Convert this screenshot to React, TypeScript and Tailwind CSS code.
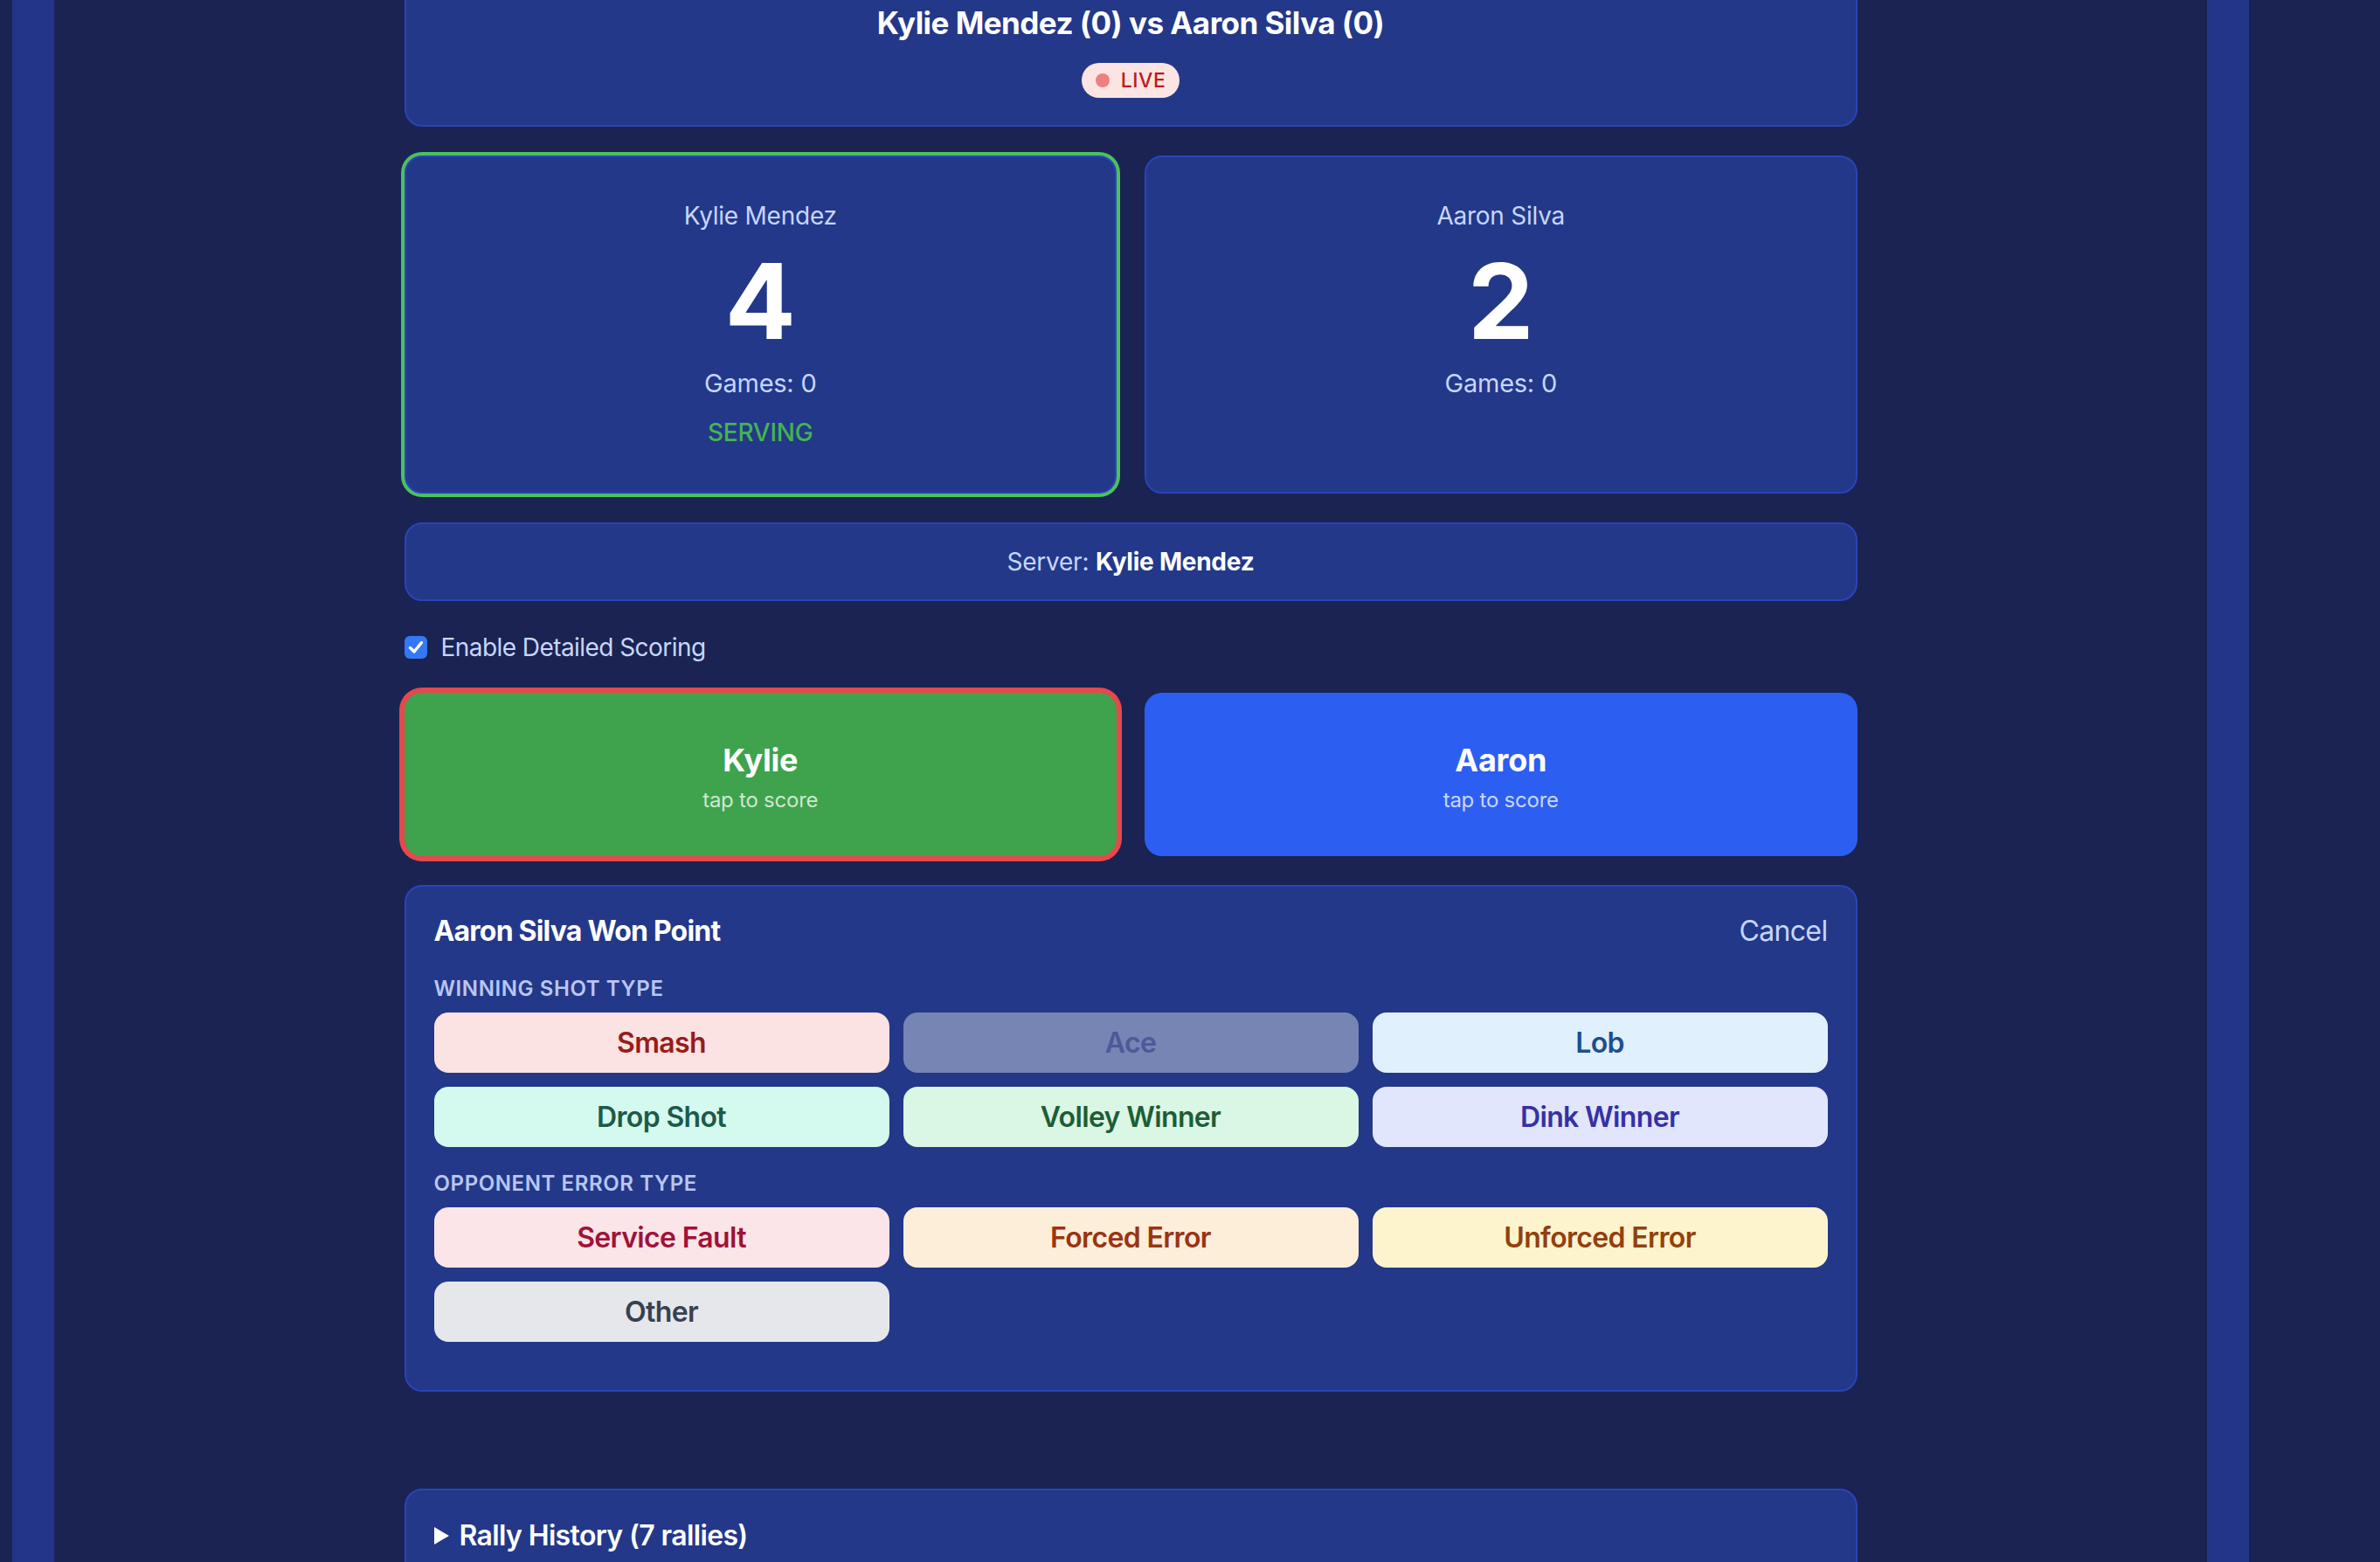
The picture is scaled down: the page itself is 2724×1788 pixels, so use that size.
import React from 'react';

type Shot = { label: string; cls: string };

const winningShots: Shot[] = [
  { label: 'Smash', cls: 'bg-[#fce3e3] text-[#991b1b]' },
  { label: 'Ace', cls: 'bg-[#7785b5] text-[#4b5a98]' },
  { label: 'Lob', cls: 'bg-[#e1f0fd] text-[#1e4e8c]' },
  { label: 'Drop Shot', cls: 'bg-[#d4f9ef] text-[#1c5a4a]' },
  { label: 'Volley Winner', cls: 'bg-[#daf6e4] text-[#1b5e36]' },
  { label: 'Dink Winner', cls: 'bg-[#e1e6fd] text-[#3730a3]' },
];

const errorShots: Shot[] = [
  { label: 'Service Fault', cls: 'bg-[#fce5e8] text-[#9f1239]' },
  { label: 'Forced Error', cls: 'bg-[#fdeeda] text-[#9a3412]' },
  { label: 'Unforced Error', cls: 'bg-[#fdf4cd] text-[#92400e]' },
  { label: 'Other', cls: 'bg-[#e5e7eb] text-[#374151]' },
];

const ShotGrid: React.FC<{ shots: Shot[] }> = ({ shots }) => (
  <div className="grid grid-cols-3 gap-[16px]">
    {shots.map((s) => (
      <button
        key={s.label}
        className={`h-[69px] rounded-[16px] text-[32px] font-semibold tracking-[-0.02em] ${s.cls}`}
      >
        {s.label}
      </button>
    ))}
  </div>
);

const ScoreCard: React.FC<{ name: string; score: number; games: number; serving?: boolean }> = ({
  name,
  score,
  games,
  serving,
}) => (
  <div
    className={`bg-[#233889] border-2 border-[#2a44b8] rounded-[20px] px-[48px] pt-[47px] pb-[48px] flex flex-col items-center ${
      serving ? 'ring-4 ring-[#4bc25c]' : ''
    }`}
  >
    <div className="text-[28px] leading-[40px] text-[#c7d6fb]">{name}</div>
    <div className="mt-[18px] text-[120px] leading-[120px] font-bold text-white">{score}</div>
    <div className="mt-[14px] text-[29px] leading-[40px] text-[#c7d6fb]">Games: {games}</div>
    {serving && (
      <div className="mt-[16px] text-[28px] leading-[40px] font-medium text-[#44b352]">SERVING</div>
    )}
  </div>
);

export default function App() {
  return (
    <div className="h-[1788px] overflow-hidden bg-[#1a2352] font-['Inter',sans-serif] tracking-[-0.015em] flex">
      <div className="w-[14px] shrink-0" />
      <div className="w-[48px] shrink-0 bg-[#223588]" />
      <div className="flex-1">
        <div className="w-[1663px] mx-auto flex flex-col">
          {/* match header, scrolled partly out of view */}
          <div className="-mt-[36px] bg-[#233889] border-2 border-[#2a44b8] rounded-[20px] pt-[32px] pb-[31px] flex flex-col items-center">
            <div className="text-[35px] leading-[56px] font-bold text-white tracking-[-0.015em]">
              Kylie Mendez (0) vs Aaron Silva (0)
            </div>
            <div className="mt-[18px] h-[40px] px-[16px] rounded-full bg-[#fde4e4] flex items-center gap-[13px]">
              <span className="w-[16px] h-[16px] rounded-full bg-[#f07f7f]" />
              <span className="text-[23px] font-medium text-[#b91c1c] tracking-wide">LIVE</span>
            </div>
          </div>

          <div className="mt-[33px] grid grid-cols-2 gap-[32px]">
            <ScoreCard name="Kylie Mendez" score={4} games={0} serving />
            <ScoreCard name="Aaron Silva" score={2} games={0} />
          </div>

          <div className="mt-[33px] bg-[#233889] border-2 border-[#2a44b8] rounded-[20px] py-[23px] text-center text-[28px] leading-[40px] text-[#c7d6fb]">
            Server: <span className="font-bold text-white">Kylie Mendez</span>
          </div>

          <label className="mt-[33px] flex items-center gap-[16px] h-[40px]">
            <span className="w-[26px] h-[26px] rounded-[6px] bg-[#3478f6] flex items-center justify-center">
              <svg width="20" height="20" viewBox="0 0 20 20">
                <path d="M3.5 10.5 L8 15 L16.5 4.5" fill="none" stroke="white" strokeWidth="3.4" strokeLinecap="round" strokeLinejoin="round" />
              </svg>
            </span>
            <span className="text-[28px] text-[#c7d6fb] tracking-[-0.02em]">Enable Detailed Scoring</span>
          </label>

          <div className="mt-[32px] grid grid-cols-2 gap-[32px]">
            <button className="h-[187px] rounded-[20px] bg-[#3ea34c] ring-[6px] ring-[#e5484d] flex flex-col items-center justify-center">
              <span className="text-[36px] leading-[56px] font-bold text-white">Kylie</span>
              <span className="mt-[2px] text-[24px] leading-[32px] text-white/75">tap to score</span>
            </button>
            <button className="h-[187px] rounded-[20px] bg-[#2d5ef2] flex flex-col items-center justify-center">
              <span className="text-[36px] leading-[56px] font-bold text-white">Aaron</span>
              <span className="mt-[2px] text-[24px] leading-[32px] text-white/75">tap to score</span>
            </button>
          </div>

          <div className="mt-[33px] bg-[#233889] border-2 border-[#2a44b8] rounded-[20px] px-[32px] pt-[31px] pb-[55px]">
            <div className="flex items-center justify-between h-[40px]">
              <div className="text-[32px] font-bold text-white tracking-[-0.025em]">Aaron Silva Won Point</div>
              <button className="text-[32px] text-[#c7d6fb] tracking-[-0.02em]">Cancel</button>
            </div>
            <div className="mt-[30px] mb-[11px] text-[24px] leading-[32px] font-semibold tracking-wide uppercase text-[#b9c6f2]">
              Winning Shot Type
            </div>
            <ShotGrid shots={winningShots} />
            <div className="mt-[26px] mb-[11px] text-[24px] leading-[32px] font-semibold tracking-wide uppercase text-[#b9c6f2]">
              Opponent Error Type
            </div>
            <ShotGrid shots={errorShots} />
          </div>

          <div className="mt-[111px] bg-[#233889] border-2 border-[#2a44b8] rounded-[20px] px-[32px] pt-[32px] pb-[200px]">
            <div className="flex items-center gap-[12px] h-[40px]">
              <svg width="17" height="20" viewBox="0 0 17 20">
                <polygon points="0,0 17,10 0,20" fill="white" />
              </svg>
              <span className="text-[32px] font-semibold text-white tracking-[-0.02em]">Rally History (7 rallies)</span>
            </div>
          </div>
        </div>
      </div>
      <div className="w-[48px] shrink-0 bg-[#223588]" />
      <div className="w-[150px] shrink-0" />
    </div>
  );
}
